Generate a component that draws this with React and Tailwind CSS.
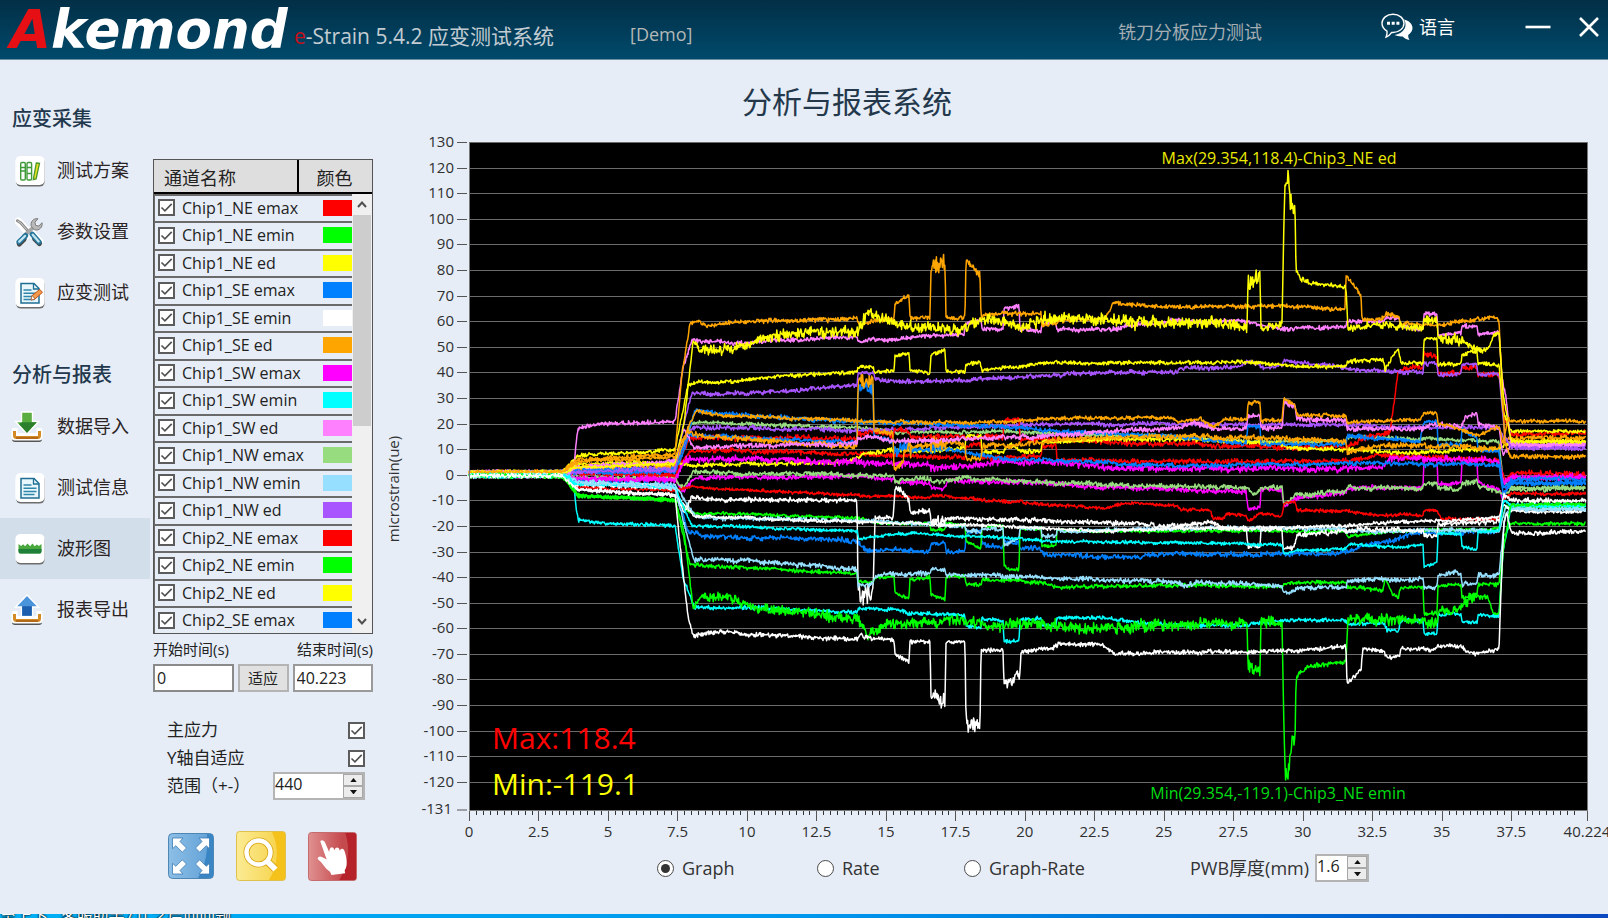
import { useState } from "react";

const FONT = "font-['Open_Sans','Noto_Sans_CJK_SC',sans-serif]";

/* ---------- channel list ---------- */
const CHANNELS = [
  ["Chip1_NE emax", "#ff0000"],
  ["Chip1_NE emin", "#00ff00"],
  ["Chip1_NE ed", "#ffff00"],
  ["Chip1_SE emax", "#0080ff"],
  ["Chip1_SE emin", "#ffffff"],
  ["Chip1_SE ed", "#ffa500"],
  ["Chip1_SW emax", "#ff00ff"],
  ["Chip1_SW emin", "#00ffff"],
  ["Chip1_SW ed", "#ff80ff"],
  ["Chip1_NW emax", "#98dc80"],
  ["Chip1_NW emin", "#96dfff"],
  ["Chip1_NW ed", "#a855ff"],
  ["Chip2_NE emax", "#ff0000"],
  ["Chip2_NE emin", "#00ff00"],
  ["Chip2_NE ed", "#ffff00"],
  ["Chip2_SE emax", "#0080ff"],
];

/* ---------- chart geometry ---------- */
const X0 = 469;
const X1 = 1587;
const Y0 = 143;
const Y1 = 811;
const T_MAX = 40.224;
const tx = (t) => X0 + (t / T_MAX) * (X1 - X0);
const vy = (v) => Y0 + ((130 - v) / 261) * (Y1 - Y0);

const R = "#ff0000", G = "#00ff00", Y = "#ffff00", B = "#0080ff", W = "#ffffff", O = "#ffa500";
const M = "#ff00ff", C = "#00ffff", P = "#ff80ff", L = "#98dc80", S = "#96dfff", V = "#a855ff";

/* Each trace: colour, noise amplitude, "x:value[:noise]" key points. */
const TRACES = [
  [M, 0.9, "578:-2 675:-2 683:-7 695:-1 857:-1 894:-1.5 895:-3 930:-3 931:-5 946:-5 947:-2 1030:-3 1110:-5 1246:-6.5 1248:-13.5 1260:-13 1261:-6 1282:-6 1284:-12 1296:-9 1346:-7 1347:-5 1423:-5 1424:6 1437:6 1438:-4 1461:-3 1462:5 1477:5 1478:-3 1499:-6 1503:-10 1511:-1"],
  [L, 0.9, "578:-1 675:-1 683:-5 693:1 760:0.5 857:0 894:0 895:-2 930:-1.5 931:-3 965:-1.5 1030:-2.5 1110:-4 1246:-5 1254:-8 1261:-5 1282:-5 1284:-12 1296:-8 1346:-6.5 1347:-5 1423:-5.5 1424:-4 1437:-3.5 1438:-5.5 1461:-5.5 1462:-3.5 1477:-2.5 1478:-4.5 1499:-6.5 1503:-8 1511:-5.6"],
  [L, 0.7, "578:1 675:3 692:20.5 760:19.5 857:18.5 900:16.5 1000:17 1060:16 1180:15 1250:13 1346:13 1347:15 1420:14 1499:13 1503:-2 1511:-5"],
  [V, 0.8, "578:2 675:3 692:18.5 857:17.5 930:18 1060:20 1280:19.5 1346:19.5 1420:18.5 1499:18.5 1505:12 1511:11"],
  [R, 1, "578:1 675:1 690:15 700:14.5 857:14 858:16 874:17 893:15 894:17.5 909:17 911:14.5 1003:15 1004:21 1019:22 1020:14 1100:13 1240:11 1346:10.5 1362:14.5 1390:17 1394:28:0.5 1398:40:0.5 1400:41 1423:42 1424:47 1437:46 1438:39.5 1461:40 1462:42 1477:42 1478:39.5 1499:39.5 1505:22 1511:16"],
  [R, 0.9, "578:0.5 675:0 690:9.5 760:9 857:8 965:6.5 966:11 981:12 982:6.5 1041:7 1042:11 1056:12 1057:6 1180:5 1346:5.5 1380:7.5 1499:6 1505:-2 1511:0.5"],
  [Y, 0.8, "578:4 675:5 690:3.5 830:5 857:6 864:8 890:9.5 930:9 965:10.5 966:15 981:15 982:9 1003:9 1010:12 1020:9 1041:9.5 1042:13 1110:14 1180:14 1280:12 1290:10 1346:10 1400:8.5 1499:10 1511:13"],
  [M, 1.2, "578:-1.5 675:-2 686:6 760:6 857:5 880:4.5 930:4 931:2.5 946:3 965:4 966:3 1000:5 1060:5 1105:2.5 1340:2 1383:3.5 1390:6.5 1423:6 1499:5.5 1504:-3 1511:-1"],
  [B, 0.8, "578:1 675:1 690:15.5 760:14 857:12.7 858:34:2.5 873:34:2.5 874:15 893:13 894:8:2.5 909:11:2 911:9.5 930:9.5 931:10:2 946:9.5 965:9 985:7.5 1010:6 1060:5.5 1180:3.5 1346:4.5 1499:4 1503:-8 1511:-3.3"],
  [B, 0.8, "578:2 675:2 695:25 720:24 857:20.5 900:20 960:19.5 1000:19 1060:17 1180:15 1200:14 1246:12 1248:19 1260:19 1261:12 1346:12 1347:15 1420:13 1424:21 1437:21 1438:12 1461:12 1462:18 1477:14 1478:10 1499:9 1503:-5 1511:-1.8"],
  [O, 1, "578:3 675:4 688:17 700:15 857:11 858:36:3 873:38:3 874:17 893:16 894:2:1 898:3:2 909:12:4 911:11 930:12 931:12:2.5 945:13:2.5 946:13 965:12 966:6 981:6 982:10.5 1020:12 1060:14 1180:15 1346:13 1347:9 1362:10 1390:12 1499:10 1505:14 1511:14.5"],
  [P, 0.9, "578:3 675:5 684:18 694:10.5 760:11.5 857:12 858:14 874:14.5 893:13 1040:15 1110:17 1180:18.5 1195:20 1213:18 1246:18 1248:23 1260:23 1261:18.5 1282:18 1284:28 1295:27 1297:22 1346:21 1347:18 1423:18 1424:19 1438:19.5 1461:19 1465:23 1477:24.5 1478:20 1499:18.5 1503:8 1511:12"],
  [R, 0.6, "578:-5 675:-6 690:-4.5 720:-5.5 857:-8 930:-9 931:-8 946:-8.5 1000:-10.5 1060:-12 1105:-13 1125:-11 1177:-12 1180:-13.5 1210:-14 1213:-17 1224:-17 1226:-15 1246:-16 1248:-18.5 1260:-15 1282:-16 1284:-11 1295:-10.5 1297:-14 1346:-14 1380:-16 1400:-15.5 1423:-16 1424:-14 1437:-14 1441:-17 1499:-17.5 1503:-10 1511:-7.5"],
  [V, 0.8, "578:1 675:2 684:20 692:32 720:31 857:35 858:39.5 873:39.5 875:37.5 900:36 960:37 1060:39 1115:40 1177:40 1180:41.5 1240:42.5 1247:44.5 1260:43.5 1261:42 1282:42.5 1284:44.5 1340:42 1347:41 1423:40 1424:43.5 1437:43.5 1438:39 1461:39.5 1462:43 1477:43 1478:39 1499:39.5 1505:14 1511:10.5"],
  [Y, 0.7, "578:7.5 675:9.5 688:35 700:36.5 720:36 760:38 857:40 858:42 873:42 875:40 894:40.5 895:46 909:48 910:41 930:40 931:48:1.2 945:48.5:1.2 946:40.5 965:40 966:43 980:44 982:41 1010:42 1055:43.5 1250:44 1284:43 1300:42 1346:42.5 1347:44 1383:45 1385:41 1392:46 1398:49 1401:43.5 1423:43.5 1424:53 1437:53 1438:43 1461:43.5 1462:47 1477:48 1478:43.5 1499:43 1503:25 1511:17"],
  [P, 0.8, "570:1 574:3 576:12 578:18 600:20 675:20.5 683:42 692:52 740:51.5 857:54 858:52 874:53 895:52.5 911:54 964:55 966:59 981:61 982:57 1003:57 1004:65 1019:66 1020:57 1041:56 1043:59 1056:59 1057:57 1110:57 1170:60 1240:60 1260:58.5 1284:57 1346:57.5 1347:59.5 1384:60 1385:61 1399:61 1400:58 1423:57 1424:63 1437:63 1438:55 1461:55 1462:58.5 1477:58 1478:55 1499:55.5 1502:38 1506:30 1511:12"],
  [O, 0.8, "578:6 675:8 682:40 690:59 694:60.5 710:58.5 760:60 857:61 860:58 872:60 894:61 895:67 909:70 910:61 930:61.5 931:82:3 945:83:4 946:61 965:61.5 966:84:1.2 980:78:1.5 981:62 1003:63 1020:63 1041:63 1042:58 1056:59 1060:60 1105:61 1113:67 1150:66 1180:65.5 1282:66 1345:64.5 1346:78 1361:70 1362:60.5 1384:61 1386:63 1399:62 1400:59 1423:59 1437:58 1461:60 1495:61.5 1499:60 1502:35 1505:12 1511:7"],
  [Y, 2, "578:3:0.6 675:4:0.6 684:20:0.6 693:52:1 701:48:2 735:50:1.8 770:54:2 800:55:2 857:56:2.5 868:63:2 885:60 900:58 930:58 950:57 965:57 985:60 1000:60 1020:57:2.2 1045:61:2.2 1060:61:2.2 1100:60:2.2 1180:60:2 1247:58:2 1248:75:3 1260:77:3.5 1261:57:1.5 1282:59 1284:100:3 1285:113:4.5 1288:114:4.5 1290:107:4 1292:104:4 1295:105:3 1296:80:1 1300:77:1 1310:75:0.8 1346:73:0.8 1348:57:1.5 1385:58:1.5 1423:57:1.5 1424:61 1437:61 1438:54:1.8 1460:52:2 1474:49:1.2 1488:49:0.8 1493:54:0.8 1499:56:0.6 1503:32:0.6 1511:12.9:0.6"],
  [O, 0.7, "578:5 675:7 696:25 720:23.5 857:21 875:20.5 1000:20.5 1060:22 1170:22.5 1180:21 1200:22 1213:19 1226:22 1247:21.5 1248:28 1260:28.5 1261:21 1282:21.5 1284:30 1295:27 1297:23.5 1346:23 1347:20.5 1420:21.5 1424:24 1437:24 1438:20 1461:18 1478:15 1499:19 1503:12 1508:22 1511:21"],
  [B, 0.9, "578:-3 675:-4 688:-22 705:-24 857:-26 866:-29 930:-30 931:-27 945:-26.5 946:-30 965:-30 966:-22 981:-22 982:-27 1003:-29 1004:-26 1019:-27 1020:-29 1041:-29 1043:-31 1110:-32 1190:-31 1340:-31 1365:-27 1390:-26 1410:-23 1499:-22 1503:-8 1511:-3.3"],
  [G, 0.6, "578:-8 675:-10 692:-15 760:-15.5 857:-17 880:-19 930:-19 931:-21.5 945:-21.5 946:-19 965:-19.5 966:-26 981:-29 982:-20 1003:-20 1004:-35 1008:-37 1019:-37 1020:-21 1041:-21 1042:-28 1056:-28 1057:-22 1180:-22 1284:-22 1346:-22 1347:-24 1400:-22 1499:-21 1506:-12 1511:-12.5"],
  [S, 0.8, "578:-3 675:-4 695:-16.5 857:-18 965:-20 966:-22 981:-22 982:-21 1003:-21 1004:-27 1019:-25 1020:-21 1041:-21 1042:-24 1056:-24 1057:-22 1180:-21 1346:-21 1347:-22 1499:-22 1506:-12 1511:-13.5"],
  [W, 0.6, "578:-6 675:-8 694:-16 857:-18.5 1000:-20 1100:-22 1180:-21 1250:-21 1346:-20 1380:-19 1499:-17 1504:-12 1511:-14.5"],
  [W, 0.9, "578:-4 675:-5 684:-15 691:-9.5 857:-10 858:-44:4 862:-47:4 873:-46:4 875:-17 893:-17 895:-6:1.5 901:-6 909:-10 910:-14.5 930:-14 931:-17:2.5 945:-18:2.5 946:-17 1060:-18 1180:-20 1210:-18.5 1226:-21 1246:-21 1248:-28 1260:-28.5 1261:-21.5 1282:-21 1283:-29 1294:-28 1297:-23.5 1346:-22 1360:-21 1423:-22 1424:-24 1437:-24 1438:-19.5 1499:-18 1504:-8 1511:-10"],
  [C, 0.6, "578:-3.5 675:-5 692:-20 857:-22 859:-25 880:-24 900:-23 965:-24 1000:-24.5 1050:-26 1240:-27 1282:-27.5 1284:-31 1300:-29.5 1346:-29 1348:-27 1400:-28.5 1423:-27 1424:-36 1437:-34 1438:-23 1461:-23 1462:-28 1477:-29 1478:-22 1499:-22 1504:-10 1511:-12"],
  [G, 0.7, "578:-8 675:-10 690:-35 720:-36 857:-38.5 858:-42 873:-42 875:-40 894:-40 895:-46 909:-48 910:-41 930:-40 931:-47 945:-49 946:-40 965:-40 966:-43 981:-43 982:-41 1040:-42 1060:-44 1180:-43 1282:-44 1284:-42.5 1346:-42 1347:-44 1383:-45 1385:-40 1392:-46 1398:-48 1401:-44 1423:-44 1424:-54 1437:-54 1438:-43 1461:-43 1462:-48 1477:-47 1478:-43 1499:-43 1503:-25 1511:-19"],
  [S, 0.9, "578:-3 675:-5 694:-33 720:-32.5 760:-34 857:-37 858:-43 873:-42 875:-39 930:-38.5 931:-37 945:-37 946:-39 1000:-39.5 1177:-42 1185:-43.5 1200:-42 1282:-43 1284:-46 1300:-44.5 1346:-44 1348:-41 1423:-41 1424:-44 1437:-44 1438:-39.5 1455:-38 1461:-39 1462:-43 1477:-43 1478:-39.5 1499:-39 1505:-16 1511:-13.5"],
  [C, 0.7, "570:-1 574:-4 576:-12 578:-17.5 600:-19 675:-20 683:-40 694:-52 760:-52 857:-54 858:-52.5 895:-52.5 911:-54 965:-55 966:-59 981:-60 982:-56 1003:-57 1004:-65 1019:-65 1020:-57 1041:-56 1042:-59 1056:-59 1057:-56 1110:-56 1140:-58 1200:-59 1240:-59 1284:-57 1346:-57 1348:-58.5 1384:-58 1387:-61 1399:-61 1400:-57 1423:-57 1424:-62 1437:-62 1438:-55 1461:-55 1462:-58 1477:-58 1478:-55 1499:-55 1503:-30 1507:-22 1511:-12"],
  [G, 2, "578:-8:0.6 675:-10:0.6 684:-22:0.6 693:-52:1 701:-48:2 735:-49:1.8 760:-52:2 800:-54:2 857:-56:2.2 868:-62:2 885:-59 930:-58 960:-57 1000:-59 1020:-57:2.2 1060:-60:2.2 1180:-59:2 1247:-58 1248:-74:3 1260:-77:3 1261:-57 1282:-58 1284:-100:3 1285:-113:4.5 1288:-114:4.5 1290:-107:4 1292:-104:4 1295:-105:3 1296:-80:1 1300:-77:1 1310:-75:0.8 1346:-73:0.8 1348:-56:2 1423:-57:1.8 1424:-58:2 1437:-58:2 1438:-54:1.8 1460:-52:2 1474:-48:1.2 1488:-48:0.6 1493:-54:0.6 1499:-55:0.6 1503:-30:0.6 1511:-11.5:0.6"],
  [W, 0.8, "578:-6 675:-8 683:-38 688:-55 693:-63 720:-61 760:-62.5 857:-64.5 860:-62.5 872:-64 894:-64.5 895:-70 909:-73 910:-65 930:-65.5 931:-87:3 945:-89:4 946:-65.5 965:-65.5 966:-97:3 980:-99:3 981:-68.5 1003:-69 1004:-82:2 1012:-81:2 1020:-78:1.5 1021:-69 1050:-68 1060:-66 1100:-66 1115:-70 1180:-69.5 1284:-69 1346:-67 1347:-82 1361:-76 1363:-68 1384:-69 1387:-71.5 1399:-71 1401:-68 1423:-68 1430:-69 1440:-66.5 1460:-67 1475:-70 1499:-68.5 1501:-45 1504:-18 1507:-15 1511:-22.5"],
];

function makeRandom(seed) {
  let s = seed;
  return () => {
    s = (s * 1664525 + 1013904223) >>> 0;
    return s / 4294967296;
  };
}

function tracePath(noise, spec, index) {
  const rnd = makeRandom(index * 7919 + 17);
  const points = spec.split(" ").map((k) => {
    const [x, v, n] = k.split(":").map(Number);
    return [x, v, n === undefined ? noise : n];
  });
  const rest = points[0][1] > 0 ? 0.9 : -0.4;
  const last = points[points.length - 1];
  const keys = [[X0, rest, 0.8], [562, rest, 0.8], ...points, [X1 - 1, last[1], 0.6]];
  let seg = 0;
  let drift = 0;
  let d = "";
  for (let x = X0; x <= X1 - 1; x += 0.6) {
    while (seg < keys.length - 2 && x > keys[seg + 1][0]) seg += 1;
    const a = keys[seg];
    const b = keys[seg + 1];
    const f = Math.min(1, Math.max(0, (x - a[0]) / (b[0] - a[0])));
    const steep = Math.abs(b[1] - a[1]) / (b[0] - a[0]) > 4;
    drift = drift * 0.94 + (rnd() - 0.5) * 0.28;
    const n = steep ? 0.2 : a[2];
    const v = a[1] + (b[1] - a[1]) * f + (drift * (x > 565 ? 1 : 0.3) + (rnd() + rnd() - 1) * 1.3) * n;
    d += (d ? "L" : "M") + x.toFixed(1) + " " + vy(v).toFixed(1);
  }
  return d;
}

const PATHS = TRACES.map(([color, noise, spec], i) => ({ color, d: tracePath(noise, spec, i) }));

const Y_TICKS = [];
for (let v = 130; v >= -120; v -= 10) Y_TICKS.push(v);
const X_TICKS = [];
for (let t = 0; t < 40; t += 2.5) X_TICKS.push(t);
X_TICKS.push(T_MAX);
const X_MINOR = [];
for (let t = 0; t < 40; t += 0.25) X_MINOR.push(t);

function StrainChart() {
  return (
    <svg viewBox="384 132 1224 714" className="block w-full" role="img" aria-label="microstrain(ue)">
      <rect x={X0} y={Y0} width={X1 - X0 + 1} height={Y1 - Y0} fill="#000" />
      {Y_TICKS.map((v) => (
        <g key={v}>
          <line x1={X0} x2={X1} y1={Math.round(vy(v)) + 0.5} y2={Math.round(vy(v)) + 0.5} stroke="#6a6a6a" strokeWidth="1.2" />
          <line x1="457" x2="467" y1={Math.round(vy(v)) + 0.5} y2={Math.round(vy(v)) + 0.5} stroke="#555" />
        </g>
      ))}
      <line x1="457" x2="467" y1="811" y2="811" stroke="#555" />
      {PATHS.map((p, i) => (
        <path key={i} d={p.d} fill="none" stroke={p.color} strokeWidth="1.5" strokeLinejoin="round" />
      ))}
      <path d={`M${X0 + 0.5} ${Y0}V${Y1 + 0.5}H${X1 + 0.5}V${Y0}`} fill="none" stroke="#777" />
      <g fontSize="15" fill="#303030" textAnchor="end">
        {Y_TICKS.map((v) => (
          <text key={v} x="454" y={vy(v) + 5}>{v}</text>
        ))}
        <text x="452" y={Y1 + 4}>-131</text>
      </g>
      {X_MINOR.map((t) => (
        <line key={t} x1={Math.round(tx(t)) + 0.5} x2={Math.round(tx(t)) + 0.5} y1="812" y2="816" stroke="#333" />
      ))}
      <g fontSize="15" fill="#303030" textAnchor="middle">
        {X_TICKS.map((t) => (
          <g key={t}>
            <line x1={Math.round(tx(t)) + 0.5} x2={Math.round(tx(t)) + 0.5} y1="812" y2="822" stroke="#555" />
            <text x={tx(t)} y="838">{t}</text>
          </g>
        ))}
      </g>
      <text x="0" y="0" fontSize="15" fill="#303030" textAnchor="middle" transform="translate(399 490) rotate(-90)">microstrain(ue)</text>
      <text x="1279" y="165" fontSize="16" fill="#ebeb00" textAnchor="middle">Max(29.354,118.4)-Chip3_NE ed</text>
      <text x="1278" y="800" fontSize="16" fill="#00dc14" textAnchor="middle">Min(29.354,-119.1)-Chip3_NE emin</text>
      <text x="492" y="750" fontSize="30" fill="#ff0000">Max:118.4</text>
      <text x="492" y="796" fontSize="30" fill="#ffff00">Min:-119.1</text>
    </svg>
  );
}

/* ---------- form controls ---------- */
function Check({ id, label }) {
  return (
    <span className="grid size-[17px] shrink-0">
      <input id={id} type="checkbox" defaultChecked aria-label={label} className="peer col-start-1 row-start-1 size-[17px] appearance-none border-2 border-[#5c5c5c] bg-white" />
      <svg viewBox="0 0 17 17" className="pointer-events-none invisible col-start-1 row-start-1 size-[17px] peer-checked:visible" aria-hidden="true">
        <path d="M3.5 8.500l3.400 3.400 6.800-7" fill="none" stroke="#505050" strokeWidth="1.600" />
      </svg>
    </span>
  );
}

function Spinner({ id, value, step, className }) {
  const [v, setV] = useState(value);
  const move = (k) => setV((o) => String(Math.round((Number(o) + k * step) * 10) / 10));
  return (
    <span className={"flex h-7 border-2 border-[#b4b4b4] bg-white " + className}>
      <input id={id} type="text" inputMode="decimal" value={v} onChange={(e) => setV(e.target.value)} className="w-0 min-w-0 flex-1 bg-transparent pb-1 text-[16px] leading-5 text-[#222] outline-none" />
      <span className="flex w-5 flex-col">
        {[1, -1].map((k) => (
          <button key={k} type="button" onClick={() => move(k)} aria-label={k > 0 ? "+" : "-"} className="flex flex-1 items-center justify-center border border-[#a8a8a8] bg-[#ececec]">
            <svg viewBox="0 0 8 5" className="w-[7px]" aria-hidden="true">
              <path d={k > 0 ? "M0 5L4 0L8 5Z" : "M0 0L4 5L8 0Z"} fill="#111" />
            </svg>
          </button>
        ))}
      </span>
    </span>
  );
}

/* ---------- sidebar icons ---------- */
function Tile({ children }) {
  return (
    <svg viewBox="0 0 32 32" className="size-8 shrink-0" aria-hidden="true">
      <rect x="1" y="2.600" width="28.600" height="29" rx="5" fill="#6d6d6d" />
      <rect x="0.400" y="1" width="29.200" height="29" rx="5" fill="#fff" />
      <g transform="translate(-1 0)">{children}</g>
    </svg>
  );
}

const IconPlan = () => (
  <Tile>
    <g fill="#fff" stroke="#3f9a3a" strokeWidth="1.400">
      <rect x="6.700" y="7.500" width="4.600" height="17.500" rx="1.200" />
      <rect x="13" y="7.500" width="4.600" height="17.500" rx="1.200" />
      <path d="M6.700 12.500h4.600M6.700 16h4.600M13 12.500h4.600M13 18.500h4.600" />
    </g>
    <path d="M22.300 8l3.200 0.400-3.400 15.600-2.800 0.600z" fill="#e8e020" stroke="#4c9a2c" strokeWidth="1.300" />
  </Tile>
);

const IconTools = () => (
  <svg viewBox="0 0 32 32" className="size-8 shrink-0" aria-hidden="true">
    <g transform="translate(-1.500 0.500) scale(0.960)">
      <g strokeLinecap="round" strokeLinejoin="round" fill="none">
        <path d="M5 5l9 10M27 26l-9-9M6 27L22 11" stroke="#fff" strokeWidth="8" />
        <path d="M6 28.500l5-5M22 23l5 5" stroke="#444" strokeWidth="5.500" />
        <path d="M4 4.500l3.500 2 7 8" stroke="#8a8a8a" strokeWidth="3" />
        <path d="M4.500 4.800l3 1.700 6 7" stroke="#d5d5d5" strokeWidth="1" />
        <path d="M11 20L21 11" stroke="#a6a6a6" strokeWidth="4" />
        <path d="M5.800 26.500l6.700-6.500" stroke="#28769b" strokeWidth="5.600" />
        <path d="M6 26.200l6-5.900" stroke="#c3e6f3" strokeWidth="2.400" />
        <path d="M19.500 18.500l7 8" stroke="#28769b" strokeWidth="5.600" />
        <path d="M20 19l6.200 7" stroke="#c3e6f3" strokeWidth="2.400" />
      </g>
      <path d="M18.500 10.500c-1.200-4.500 2-9 7-8.200l-3.200 3.700.9 3.200 3.200.8 3.300-3.500c1 4.700-3 8.400-7.500 7.500z" fill="#b9b9b9" stroke="#777" strokeWidth="1" />
    </g>
  </svg>
);

const PageShape = () => (
  <g>
    <path d="M7 6.500h13l5 5V26H7z" fill="#e9f6fb" stroke="#1f6f94" strokeWidth="1.500" />
    <path d="M19.500 6.500V12H25" fill="none" stroke="#1f6f94" strokeWidth="1.300" />
    <path d="M9.500 13h8M9.500 16.200h13M9.500 19.400h13M9.500 22.600h11" stroke="#2f86ab" strokeWidth="1.500" />
  </g>
);

const IconTest = () => (
  <Tile>
    <PageShape />
    <path d="M17 23l1.200-4.600 7.600-6 2.600 3-7.400 6.600z" fill="#f39a4a" stroke="#c2531c" strokeWidth="1" />
    <path d="M17 23l1.200-4.600 2.800 3.600z" fill="#fff" stroke="#a05a30" strokeWidth="0.700" />
  </Tile>
);

const IconInfo = () => (
  <Tile>
    <PageShape />
  </Tile>
);

const IconWave = () => (
  <Tile>
    <path d="M4.500 11l2.600 2 2-1.800 2 2 2.400-2.600 2.600 2.600 2.400-2.600 2.200 2.600 2.200-1.800 2 1.600 2.600-2V18q0 2.600-2.600 2.600H7.100Q4.500 20.600 4.500 18z" fill="#48a83e" />
    <path d="M4.500 16v2q0 2.600 2.600 2.600h17.800q2.600 0 2.600-2.600v-2z" fill="#1d7f38" />
  </Tile>
);

const TrayShape = ({ children }) => (
  <svg viewBox="0 0 32 32" className="-ml-1 mr-1 size-8 shrink-0" aria-hidden="true">
    <path d="M1 20q0-2 2-2h3v5h20v-5h3q2 0 2 2v8q0 3-3 3H4q-3 0-3-3z" fill="#555" />
    <path d="M0.500 19q0-2 2-2h4v5h19v-5h4q2 0 2 2v7q0 3.500-3.500 3.500H4Q0.500 29.500 0.500 26z" fill="#fff" />
    <path d="M3.500 20v4.500q0 2 2 2h21q2 0 2-2V20" fill="none" stroke="#d38a25" strokeWidth="3" />
    <path d="M5 27h22" stroke="#a85c12" strokeWidth="1.400" />
    {children}
  </svg>
);

const IconImport = () => (
  <TrayShape>
    <path d="M10.500 1h11v9.500h6L16 23 4.500 10.500h6z" fill="#5aae40" stroke="#fff" strokeWidth="1.400" />
    <path d="M11.300 11.300h14.400L16 21.800 8 13z" fill="#2c7f2c" />
  </TrayShape>
);

const IconExport = () => (
  <TrayShape>
    <path d="M16 1l11.500 12h-6v9.500h-11V13h-6z" fill="#4a94dc" stroke="#fff" strokeWidth="1.400" />
    <path d="M6.500 12.300h19l-4.700 0v9.500h-9.600v-9.500z" fill="#1d5fae" />
  </TrayShape>
);

function NavItem({ icon, text, active }) {
  return (
    <li>
      <a href="#" aria-current={active ? "page" : undefined} className={"flex h-[61px] items-center gap-2.5 pl-[15px] text-[18px] leading-6 text-[#2b2424] " + (active ? "bg-[#d2deea]" : "")}>
        {icon}
        <span className="pb-0.5">{text}</span>
      </a>
    </li>
  );
}

function Header() {
  return (
    <header className="flex h-[60px] items-center whitespace-nowrap border-b border-[#6d8fa6] bg-linear-to-b from-[#022f46] to-[#004a6c] pl-2.5">
      <div className="w-[284px] font-['DejaVu_Sans',sans-serif] text-[53px] font-bold italic leading-[60px] text-white">
        <span className="text-[#e60f14]">A</span>kemond
      </div>
      <h1 className="w-[336px] pt-3 text-[21px] leading-7 text-[#c3ccd2]">
        <span className="text-[#c8101c]">e</span>-Strain 5.4.2 应变测试系统
      </h1>
      <p className="pt-2 text-[18px] leading-6 text-[#b4b8b6]">[Demo]</p>
      <p className="ml-auto mr-[119px] pt-1 text-[18px] leading-6 text-[#a4adb2]">铣刀分板应力测试</p>
      <button type="button" className="mr-[70px] flex items-center gap-1.5 pb-1.5 text-[18px] leading-6 text-white">
        <svg viewBox="0 0 32 28" className="h-7 w-8" aria-hidden="true">
          <path d="M23 6.500c5 1 8.500 4.500 8.500 8.500 0 2.800-1.600 5.200-4.300 6.900 0 2 .3 3.400 1.300 5.100-3-.5-5.200-1.800-6.700-3.600-3 .3-6-.3-8.300-1.400 6-1 11-5 11-10 0-2-.5-4-1.500-5.500z" fill="#fff" />
          <path d="M12 1.200c6.200 0 11 4 11 9.100s-4.800 9.200-11 9.200l-1.300-.1c-1.500 2.200-3.300 4-5.600 4.700.8-2 1.200-4 .9-6C3 16.400 1 13.600 1 10.300 1 5.200 5.800 1.200 12 1.200z" fill="#033c57" stroke="#fff" strokeWidth="1.400" />
          <path d="M6 8.800h3v3H6zM10.700 8.800h3v3h-3zM15.400 8.800h3v3h-3z" fill="#fff" />
        </svg>
        语言
      </button>
      <button type="button" aria-label="最小化" className="mr-7 pb-1.5">
        <svg viewBox="0 0 26 20" className="h-5 w-[26px]" aria-hidden="true">
          <path d="M0.500 10h25" stroke="#fff" strokeWidth="2.600" />
        </svg>
      </button>
      <button type="button" aria-label="关闭" className="mr-[9px] pb-1.5">
        <svg viewBox="0 0 20 20" className="size-5" aria-hidden="true">
          <path d="M1 1l18 18M19 1L1 19" stroke="#fff" strokeWidth="2.600" />
        </svg>
      </button>
    </header>
  );
}

function Sidebar() {
  return (
    <nav className="w-[150px] shrink-0 pt-9">
      <h2 className="flex h-11 items-center pl-3 pt-0.5 text-[20px] font-medium leading-7 text-[#22384d]">应变采集</h2>
      <ul>
        <NavItem icon={<IconPlan />} text="测试方案" />
        <NavItem icon={<IconTools />} text="参数设置" />
        <NavItem icon={<IconTest />} text="应变测试" />
      </ul>
      <h2 className="mt-[29px] flex h-11 items-center pl-3 pt-0.5 text-[20px] font-medium leading-7 text-[#22384d]">分析与报表</h2>
      <ul>
        <NavItem icon={<IconImport />} text="数据导入" />
        <NavItem icon={<IconInfo />} text="测试信息" />
        <NavItem icon={<IconWave />} text="波形图" active />
        <NavItem icon={<IconExport />} text="报表导出" />
      </ul>
    </nav>
  );
}

function ChannelTable() {
  return (
    <div className="h-[475px] overflow-hidden border border-[#555]">
      <table className="w-full table-fixed border-separate border-spacing-0">
        <colgroup>
          <col className="w-[28px]" />
          <col />
          <col className="w-[29px]" />
          <col className="w-5" />
        </colgroup>
        <thead>
          <tr className="h-[34px] text-[18px] text-[#222]">
            <th colSpan={4} scope="colgroup" className="border-b-2 border-black bg-[#dedede] p-0 font-normal">
              <div className="flex h-8 leading-8">
                <span className="w-[145px] border-r-2 border-black pl-2.5 pt-0.5 text-left">通道名称</span>
                <span className="flex-1 pt-0.5 pr-0.5">颜色</span>
              </div>
            </th>
          </tr>
        </thead>
        <tbody>
          {CHANNELS.map(([name, color], i) => (
            <tr key={name} className="odd:h-[27px] even:h-[28px]">
              <td className="border-l border-t-2 border-[#6a6a6a] p-0 pb-0.5 pl-[3px]">
                <Check id={"ch" + i} />
              </td>
              <td className="overflow-hidden whitespace-nowrap border-t-2 border-[#6a6a6a] p-0 pb-0.5 text-[16px] leading-5 text-[#222]">
                <label htmlFor={"ch" + i}>{name}</label>
              </td>
              <td className="border-t-2 border-[#6a6a6a] p-0 pb-0.5">
                <div className="h-4 w-[29px]" style={{ backgroundColor: color }} />
              </td>
              {i === 0 && (
                <td rowSpan={CHANNELS.length} className="bg-[#f0f0f0] p-0 align-top">
                  <div className="flex h-[438px] flex-col items-center">
                    <button type="button" aria-label="向上" className="flex h-[21px] items-center">
                      <svg viewBox="0 0 10 7" className="w-2.5" aria-hidden="true">
                        <path d="M1 6l4-4.500L9 6" fill="none" stroke="#505050" strokeWidth="2" />
                      </svg>
                    </button>
                    <div className="h-[211px] w-[18px] bg-[#cdcdcd]" />
                    <button type="button" aria-label="向下" className="mt-auto flex h-[21px] items-center">
                      <svg viewBox="0 0 10 7" className="w-2.5" aria-hidden="true">
                        <path d="M1 1l4 4.500L9 1" fill="none" stroke="#505050" strokeWidth="2" />
                      </svg>
                    </button>
                  </div>
                </td>
              )}
            </tr>
          ))}
        </tbody>
      </table>
    </div>
  );
}

function ToolButtons() {
  return (
    <div className="mt-[31px] flex items-center gap-[22px] pl-[15px]">
      <button type="button" aria-label="全图">
        <svg viewBox="0 0 46 46" className="size-[46px]" aria-hidden="true">
          <defs>
            <linearGradient id="blueFill" x1="0" x2="1">
              <stop offset="0" stopColor="#8dbfe6" />
              <stop offset="1" stopColor="#5f9fd6" />
            </linearGradient>
          </defs>
          <rect x="0.500" y="0.500" width="45" height="45" rx="4" fill="url(#blueFill)" stroke="#4e86b4" />
          <path d="M39 1h3q3 0 3 3v38q0 3-3 3H30q11-19 9-44z" fill="#3a85c4" />
          <g fill="#fff" stroke="#3c7cb4" strokeWidth="0.800">
            <path id="arrow" d="M4.500 5h10.500l-3 3.500 6.500 6.500-4.200 4.200-6.500-6.500-3.300 3z" />
            <use href="#arrow" transform="translate(46 0) scale(-1 1)" />
            <use href="#arrow" transform="translate(0 46) scale(1 -1)" />
            <use href="#arrow" transform="translate(46 46) scale(-1 -1)" />
          </g>
        </svg>
      </button>
      <button type="button" aria-label="缩放">
        <svg viewBox="0 0 50 50" className="size-[50px]" aria-hidden="true">
          <defs>
            <linearGradient id="goldFill" x1="0" x2="1">
              <stop offset="0" stopColor="#fbeb94" />
              <stop offset="1" stopColor="#f6d041" />
            </linearGradient>
          </defs>
          <rect x="0.500" y="0.500" width="49" height="49" rx="3" fill="url(#goldFill)" stroke="#dfc04c" />
          <path d="M36 1h11q2 0 2 2v44q0 2-2 2H33q14-24 3-48z" fill="#f5c21c" />
          <path d="M31 30l8 8" stroke="#d9a414" strokeWidth="7.600" />
          <circle cx="22.500" cy="21.500" r="12" fill="none" stroke="#d9a414" strokeWidth="6" />
          <circle cx="22.500" cy="21.500" r="12" fill="none" stroke="#fff" strokeWidth="4.400" />
          <path d="M30.500 29.500l9 9" stroke="#fff" strokeWidth="5.800" />
        </svg>
      </button>
      <button type="button" aria-label="拖动">
        <svg viewBox="0 0 50 50" className="size-[49px]" aria-hidden="true">
          <defs>
            <linearGradient id="redFill" x1="0" x2="1">
              <stop offset="0" stopColor="#e09090" />
              <stop offset="0.700" stopColor="#c54a4e" />
            </linearGradient>
          </defs>
          <rect x="0.500" y="0.500" width="49" height="49" rx="3" fill="url(#redFill)" stroke="#c4696c" />
          <path d="M38 1h9q2 0 2 2v44q0 2-2 2H32q14-24 6-48z" fill="#b5222a" />
          <path d="M12.500 9.500q2-2.500 4.500 0.500l4.600 10.500q0.200-4.500 2.600-5 2-0.200 2.800 3.200 0.600-3 2.600-3 2.200 0 2.800 3.400 1-2.400 2.800-2 1.800 0.500 2.400 3.400 2.400 8 1.800 13.500-0.600 3.500-2 5.200l0.600 2.800-14 2-1.600-3.400q-4-2.600-6.600-6.600-1.400-3-5-5.400-1.800-2 0-3.200 2-1.200 5.400 1.200l2.800 1.400z" fill="#fff" />
        </svg>
      </button>
    </div>
  );
}

function ControlPanel() {
  return (
    <section className="w-[220px] shrink-0 pt-[99px]">
      <ChannelTable />
      <div className="mt-1 flex justify-between text-[15px] leading-[22px] text-[#222]">
        <label htmlFor="t0">开始时间(s)</label>
        <label htmlFor="t1">结束时间(s)</label>
      </div>
      <div className="mt-1 flex items-center gap-1 text-[16px] leading-5 text-[#222]">
        <input id="t0" defaultValue="0" className="h-7 w-0 min-w-0 flex-1 border-2 border-[#8a8a8a] bg-white px-0.5" />
        <button type="button" className="h-7 w-[51px] border-2 border-[#b4b4b4] bg-[#e1e1e1] text-[15px]">适应</button>
        <input id="t1" defaultValue="40.223" className="h-7 w-0 min-w-0 flex-1 border-2 border-[#9a9a9a] bg-white px-0.5" />
      </div>
      <div className="mt-6 pl-3.5 pr-2 text-[17px] leading-7 text-[#222]">
        <div className="flex h-7 items-center justify-between">
          <label htmlFor="principal">主应力</label>
          <Check id="principal" />
        </div>
        <div className="flex h-7 items-center justify-between">
          <label htmlFor="autoY">Y轴自适应</label>
          <Check id="autoY" />
        </div>
        <div className="flex h-7 items-center justify-between">
          <label htmlFor="range">范围（+-）</label>
          <Spinner id="range" value="440" step={10} className="w-[92px]" />
        </div>
      </div>
      <ToolButtons />
    </section>
  );
}

function Radio({ label, defaultChecked }) {
  return (
    <label className="flex items-center gap-2">
      <span className="grid size-[17px] place-items-center">
        <input type="radio" name="mode" defaultChecked={defaultChecked} className="peer col-start-1 row-start-1 size-[17px] appearance-none rounded-full border-[1px] border-[#4a4a4a] bg-white" />
        <span className="pointer-events-none invisible col-start-1 row-start-1 size-[9px] rounded-full bg-[#333] peer-checked:visible" />
      </span>
      {label}
    </label>
  );
}

export default function App() {
  return (
    <div className={"flex min-h-screen flex-col overflow-hidden bg-[#e6edf7] " + FONT}>
      <Header />
      <div className="flex flex-1">
        <Sidebar />
        <div className="w-[3px] shrink-0" />
        <ControlPanel />
        <main className="min-w-0 flex-1 pl-[11px]">
          <h2 className="ml-[358px] pt-[22px] text-[30px] leading-10 text-[#24384c]">分析与报表系统</h2>
          <div className="mt-[9px]">
            <StrainChart />
          </div>
          <div className="mt-[9px] flex items-center pl-[273px] text-[18px] leading-7 text-[#333]">
            <div className="w-[160px]"><Radio label="Graph" defaultChecked /></div>
            <div className="w-[147px]"><Radio label="Rate" /></div>
            <div className="w-[226px]"><Radio label="Graph-Rate" /></div>
            <label htmlFor="pwb" className="mr-1.5">PWB厚度(mm)</label>
            <Spinner id="pwb" value="1.6" step={0.1} className="w-[54px]" />
          </div>
        </main>
      </div>
      <footer className="h-1 overflow-hidden whitespace-nowrap bg-linear-to-r from-[#00b0f4] via-[#0098ee] to-[#0a48c0] text-[16px] leading-1 text-white [text-shadow:0_0_2px_#000,0_0_2px_#000]">
        至上下&nbsp;&nbsp; 客服助手7.0 之后问问题
      </footer>
    </div>
  );
}
